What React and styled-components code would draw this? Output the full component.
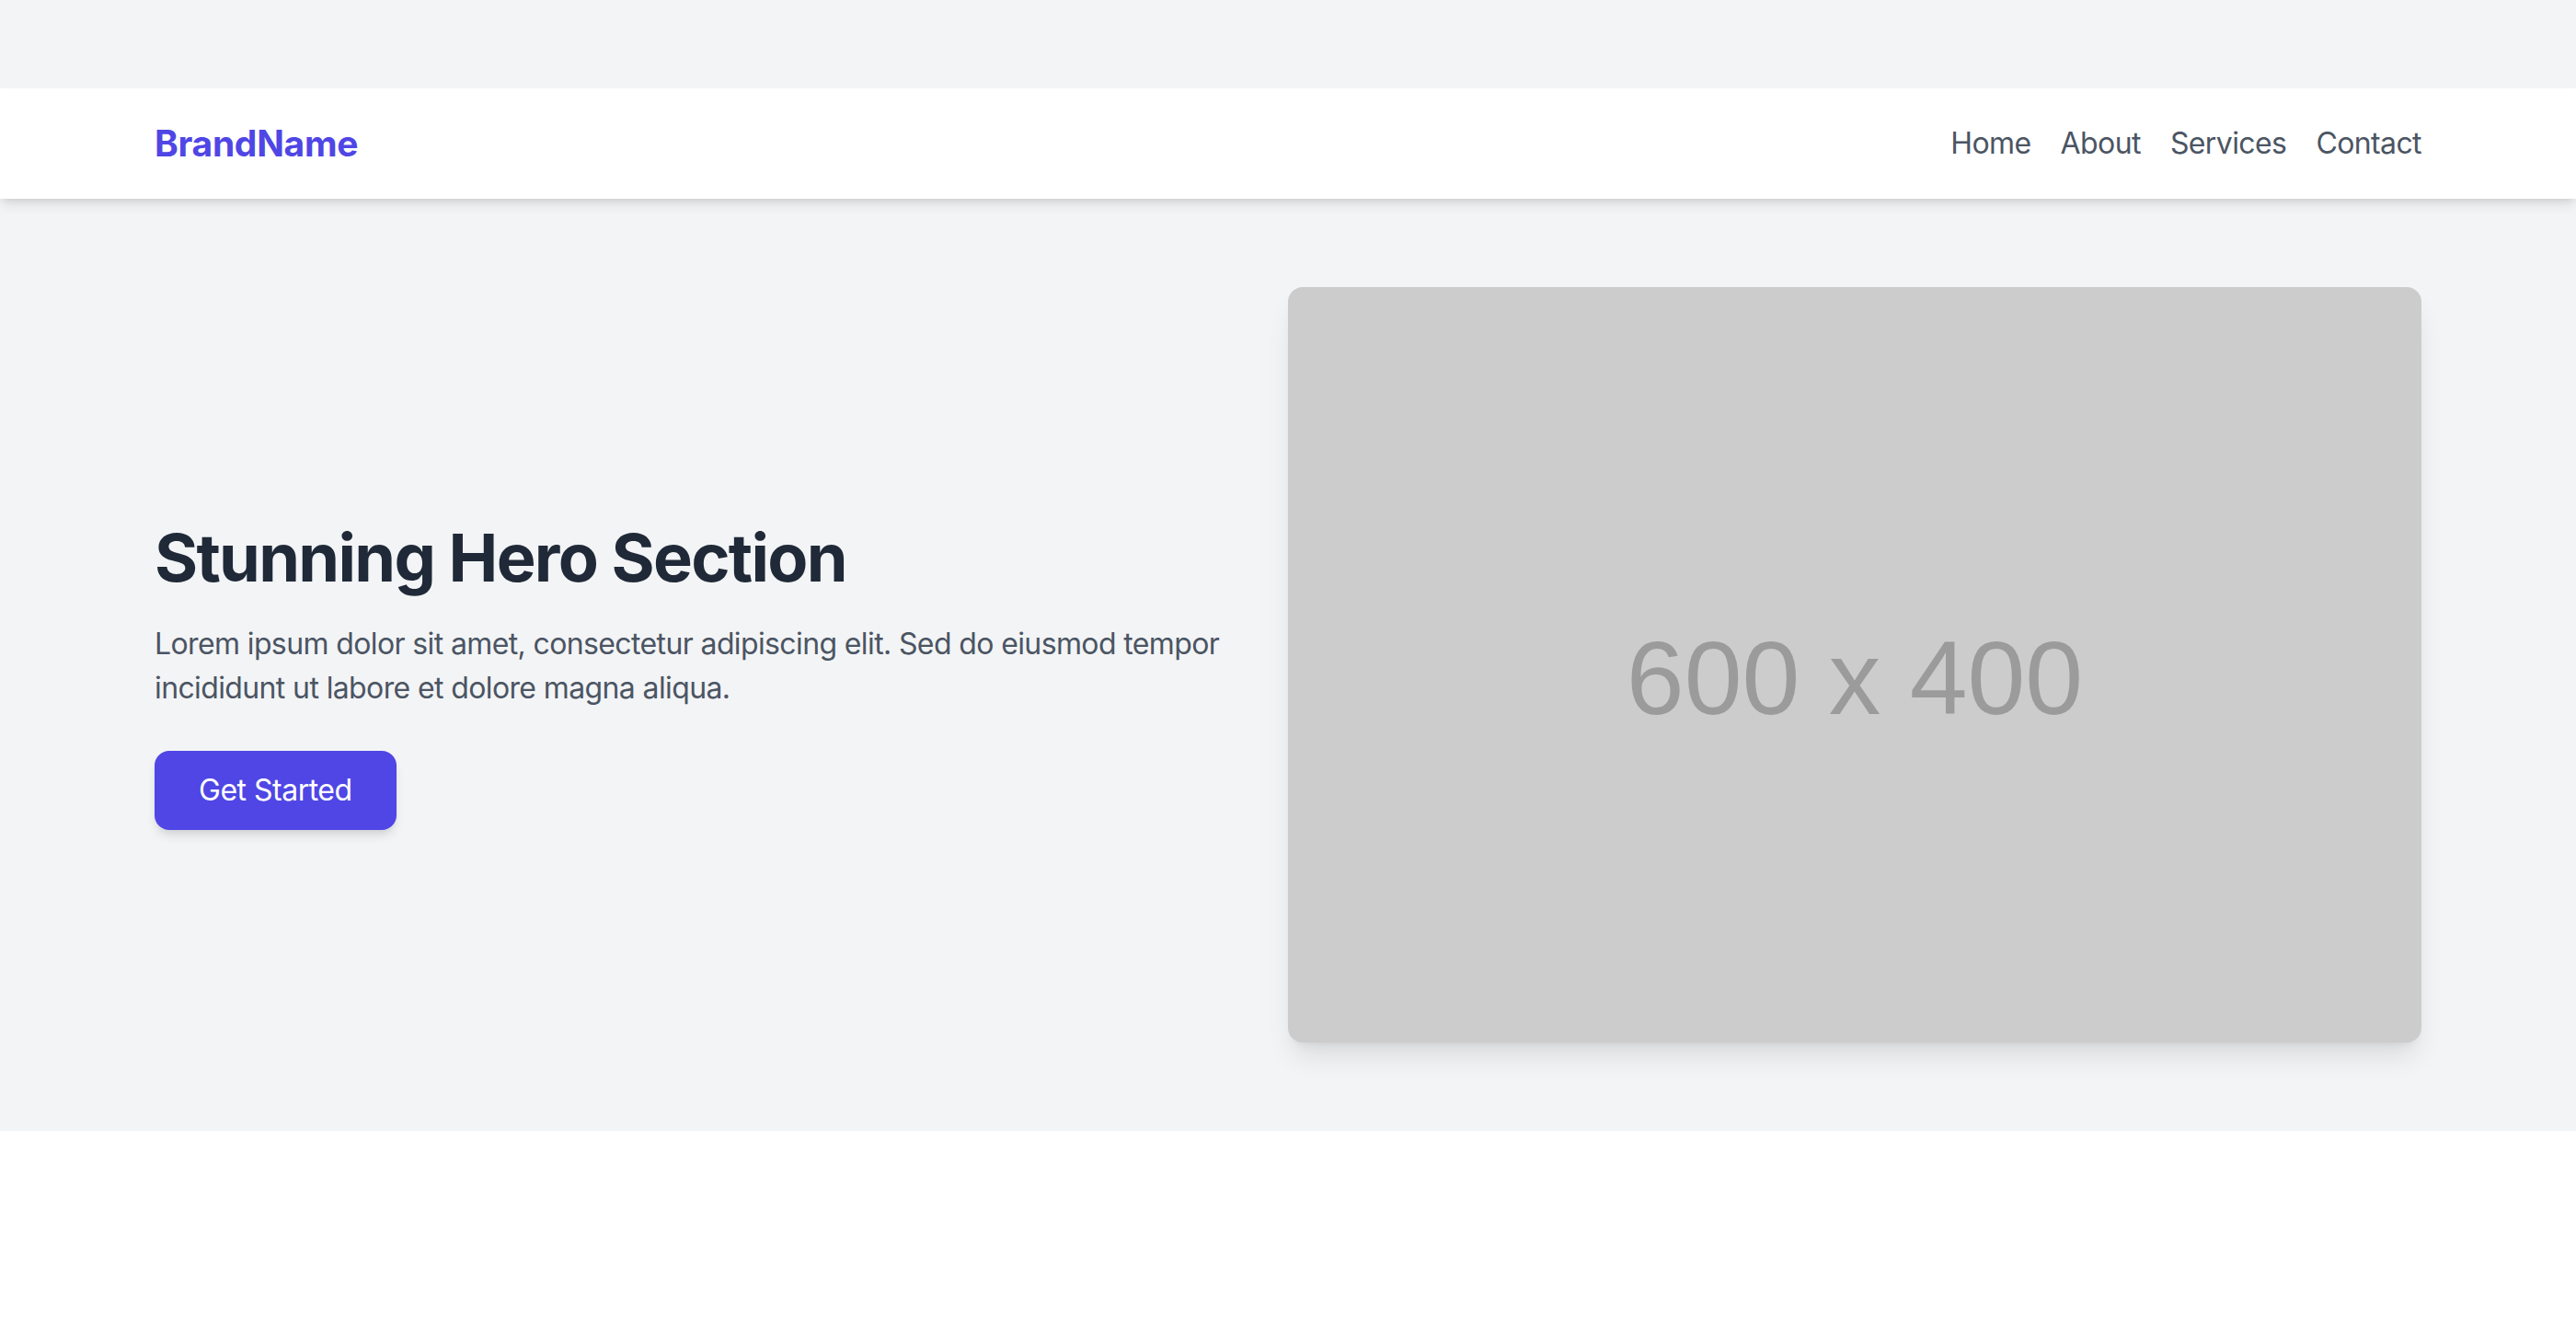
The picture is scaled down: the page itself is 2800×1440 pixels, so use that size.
import React from "react";
import styled, { createGlobalStyle } from "styled-components";

const GlobalStyle = createGlobalStyle`
  html, body {
    margin: 0;
    padding: 0;
    background: #ffffff;
    font-family: Inter, "Noto Sans", "Liberation Sans", sans-serif;
    -webkit-font-smoothing: antialiased;
  }
  * { box-sizing: border-box; }
`;

const Page = styled.div`
  background: #f3f4f6;
  padding-top: 96px;
`;

const Header = styled.header`
  position: relative;
  z-index: 2;
  background: #ffffff;
  box-shadow: 0 8px 12px -2px rgba(0, 0, 0, 0.1), 0 4px 8px -4px rgba(0, 0, 0, 0.1);
`;

const Container = styled.div`
  max-width: 2560px;
  margin: 0 auto;
  padding: 0 48px;
`;

const HeaderBar = styled(Container)`
  height: 120px;
  display: flex;
  align-items: center;
  justify-content: space-between;
`;

const Brand = styled.a`
  font-size: 39px;
  line-height: 56px;
  font-weight: 700;
  color: #4f46e5;
  text-decoration: none;
  letter-spacing: -0.3px;
`;

const Nav = styled.nav`
  display: flex;
  align-items: center;
  gap: 32px;
`;

const NavLink = styled.a`
  font-size: 32px;
  line-height: 48px;
  color: #4b5563;
  text-decoration: none;
  letter-spacing: -0.6px;
`;

const Hero = styled.section`
  padding: 96px 0;
`;

const HeroRow = styled(Container)`
  display: flex;
  align-items: center;
`;

const HeroText = styled.div`
  flex: 0 0 50%;
  padding-right: 64px;
  padding-top: 22px;
`;

const Title = styled.h1`
  margin: 0 0 30px;
  font-size: 72px;
  line-height: 80px;
  font-weight: 700;
  color: #1f2937;
  letter-spacing: -1.7px;
`;

const Lead = styled.p`
  margin: 0 0 44px;
  font-size: 32px;
  line-height: 48px;
  color: #4b5563;
  letter-spacing: -0.62px;
`;

const CTA = styled.a`
  display: inline-block;
  padding: 19px 48px;
  font-size: 32px;
  line-height: 48px;
  color: #ffffff;
  background: #4f46e5;
  border-radius: 16px;
  text-decoration: none;
  letter-spacing: -0.5px;
  box-shadow: 0 8px 12px -2px rgba(0, 0, 0, 0.1), 0 4px 8px -4px rgba(0, 0, 0, 0.1);
`;

const HeroMedia = styled.div`
  flex: 0 0 50%;
`;

const Placeholder = styled.div`
  width: 100%;
  aspect-ratio: 3 / 2;
  background: #cccccc;
  border-radius: 16px;
  box-shadow: 0 20px 30px -6px rgba(0, 0, 0, 0.1), 0 8px 12px -8px rgba(0, 0, 0, 0.1);
  display: flex;
  align-items: center;
  justify-content: center;
  padding-top: 28px;
  font-family: "Liberation Sans", Arial, sans-serif;
  font-size: 113px;
  color: #9b9b9b;
`;

export default function App() {
  return (
    <>
      <GlobalStyle />
      <Page>
        <Header>
          <HeaderBar>
            <Brand href="#">BrandName</Brand>
            <Nav>
              <NavLink href="#">Home</NavLink>
              <NavLink href="#">About</NavLink>
              <NavLink href="#">Services</NavLink>
              <NavLink href="#">Contact</NavLink>
            </Nav>
          </HeaderBar>
        </Header>
        <Hero>
          <HeroRow>
            <HeroText>
              <Title>Stunning Hero Section</Title>
              <Lead>
                Lorem ipsum dolor sit amet, consectetur adipiscing elit. Sed do eiusmod tempor
                incididunt ut labore et dolore magna aliqua.
              </Lead>
              <CTA href="#">Get Started</CTA>
            </HeroText>
            <HeroMedia>
              <Placeholder>600 x 400</Placeholder>
            </HeroMedia>
          </HeroRow>
        </Hero>
      </Page>
    </>
  );
}
